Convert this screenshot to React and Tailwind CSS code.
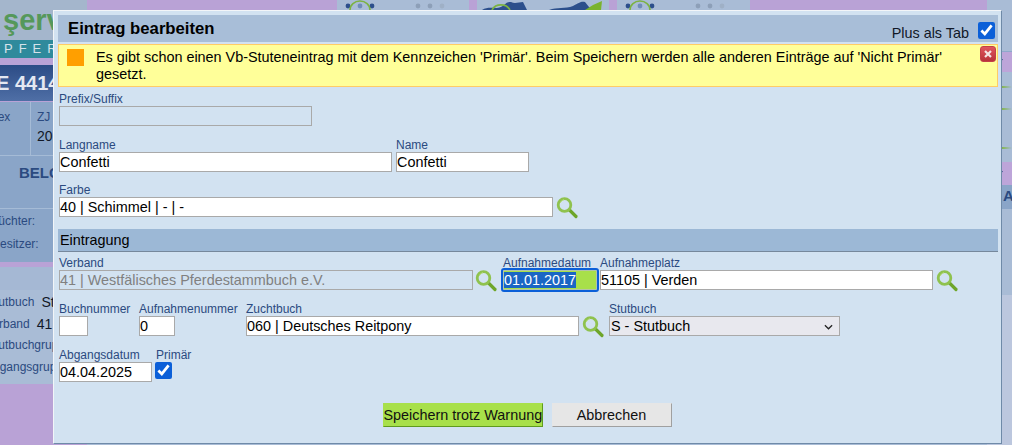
const FONT = "font-['Liberation_Sans',Arial,sans-serif]";

function Magnifier() {
  return (
    <svg viewBox="0 0 24 24" className="w-[24px] h-[24px] -my-[2px] shrink-0">
      <path d="M13.5 15 L20 21.5" stroke="#6ea52a" strokeWidth="3.2" strokeLinecap="round" />
      <circle cx="8.5" cy="10" r="6.3" fill="none" stroke="#8fc24e" strokeWidth="2.8" />
      <path d="M4.2 8 A5.5 5.5 0 0 1 8 4.6" fill="none" stroke="#b6dc80" strokeWidth="1" />
    </svg>
  );
}

function Label({ children }) {
  return <label className="block h-[14px] text-[12px] leading-[14px] text-[#2b4a80] whitespace-nowrap">{children}</label>;
}

function TextInput({ value, className = "", disabled = false }) {
  return (
    <input
      readOnly
      disabled={disabled}
      defaultValue={value}
      className={
        "block h-[20px] border border-[#a9a9a9] px-0 text-[14.4px] leading-[18px] outline-none " +
        (disabled ? "bg-[#d2e2f1] text-[#808080] " : "bg-white text-black ") +
        className
      }
    />
  );
}

function Check() {
  return <input type="checkbox" readOnly defaultChecked className="block m-0 w-[17px] h-[17px] accent-[#0b5fd8]" />;
}

function StripDots() {
  return (
    <svg viewBox="0 0 130 10" className="w-[130px] h-[10px]">
      <circle cx="11" cy="6" r="2.4" fill="#2c4f8c" />
      <circle cx="35" cy="6" r="2.4" fill="#2c4f8c" />
      <circle cx="23" cy="6" r="2.4" fill="#6f8cb8" />
      <path d="M13 10 A10 9 0 0 1 33 10" fill="none" stroke="#7cb342" strokeWidth="1.6" />
      <circle cx="81" cy="6" r="2.4" fill="#8d9fb8" />
      <circle cx="93" cy="6" r="2.4" fill="#8d9fb8" />
      <circle cx="105" cy="6" r="2.4" fill="#9fb0c6" />
    </svg>
  );
}

function StripWave() {
  return (
    <svg viewBox="0 0 133 10" className="w-[133px] h-[10px]">
      <path d="M5 10 C10 7 14 8 20 8 C28 7 28 1 34 2 C38 4 42 2 46 2 L50 10 Z" fill="#2c4f8c" />
      <path d="M15 10 A10 9 0 0 1 33 10" fill="none" stroke="#7cb342" strokeWidth="1.6" />
      <path d="M72 10 C80 7 88 9 96 6 C102 3 104 1 108 2 L112 7 L116 10 Z" fill="#2c4f8c" />
      <path d="M108 10 L116 5 L125 1 L124 10 Z" fill="#7ab32e" />
    </svg>
  );
}

function LeftColumn() {
  return (
    <div className="w-[87px] shrink-0 flex flex-col overflow-hidden">
      <div className="h-[40px] bg-[#a4b6cc] overflow-hidden pl-[3px] pt-[3px]">
        <span className="text-[29px] leading-[34px] font-bold text-[#55985a] whitespace-nowrap">şerv</span>
      </div>
      <div className="h-[18px] bg-[#2f8a9c] pl-[4px] text-[13px] leading-[18px] tracking-[6px] text-[#d5e2ea] whitespace-nowrap">PFER</div>
      <div className="h-[7px] bg-[#b9a2d6]" />
      <div className="h-[36px] bg-gradient-to-b from-[#2c4c86] to-[#4f6fa6] text-[20px] leading-[36px] font-bold text-[#e4e8f2] whitespace-nowrap">
        <div className="-ml-[4px]">E 4414</div>
      </div>
      <div className="h-[1px] bg-[#b9a2d6]" />
      <div className="h-[54px] flex bg-[#8aa5c8] border-b border-[#a5bbd6]">
        <div className="w-[31px] border-r border-[#a5bbd6] text-[12px] leading-[14px] text-[#2b4a80] pt-[8px] whitespace-nowrap">
          <div className="-ml-[19px]">Index</div>
        </div>
        <div className="pl-[6px] pt-[8px] text-[12px] leading-[14px] text-[#2b4a80] whitespace-nowrap">
          ZJ
          <div className="text-[14px] leading-[16px] mt-[4px] text-[#111827]">2017</div>
        </div>
      </div>
      <div className="h-[53px] bg-[#8aa5c8] border-b border-[#a5bbd6] pl-[19px] pt-[8px] text-[15px] leading-[18px] font-bold text-[#2b4a80] whitespace-nowrap">BELGIEN</div>
      <div className="h-[53px] bg-[#8aa5c8] pt-[5px] text-[12px] text-[#2b4a80] whitespace-nowrap">
        <div className="h-[23px] leading-[14px] -ml-[9px]">Züchter:</div>
        <div className="h-[16px] leading-[14px] -ml-[8px]">Besitzer:</div>
      </div>
      <div className="h-[5px] bg-[#b9a2d6]" />
      <div className="h-[23px] bg-[#a5b8d4]" />
      <div className="h-[94px] bg-[#a9bcd6] text-[12px] text-[#2b4a80] whitespace-nowrap pt-[1px]">
        <div className="h-[22px] leading-[20px] flex items-center gap-[7px] -ml-[13px]">Stutbuch <span className="text-[14px] text-[#111827]">Stutbuch</span></div>
        <div className="h-[22px] leading-[20px] flex items-center gap-[7px] -ml-[15px]">Verband <span className="text-[14px] text-[#111827]">41</span></div>
        <div className="h-[22px] leading-[20px] -ml-[13px]">Stutbuchgruppe</div>
        <div className="h-[22px] leading-[20px] -ml-[15px]">Abgangsgruppe</div>
      </div>
      <div className="flex-1 bg-[#b9a2d6]" />
    </div>
  );
}

function CenterColumn() {
  return (
    <div className="flex-1 flex flex-col">
      <div className="h-[10px] flex">
        <div className="w-[250px] bg-[#b9a2d6]" />
        <div className="w-[132px] bg-[#a9bcd6]"><StripDots /></div>
        <div className="w-[8px] bg-[#b9a2d6]" />
        <div className="w-[132px] bg-[#a9bcd6]"><StripWave /></div>
        <div className="w-[8px] bg-[#b9a2d6]" />
        <div className="w-[133px] bg-[#a9bcd6]"><StripDots /></div>
        <div className="flex-1 bg-[#b9a2d6]" />
      </div>
      <div className="flex-1 bg-[#a9bcd6]" />
    </div>
  );
}

function RightColumn() {
  return (
    <div className="w-[25px] shrink-0 flex flex-col overflow-hidden bg-[#a9bcd6]">
      <div className="h-[52px] border-b border-[#8fa8cc]" />
      <div className="h-[20px] bg-[#bda5d9] flex items-center justify-end pr-[9px]">
        <span className="w-0 h-0 border-l-[4px] border-r-[4px] border-t-[6px] border-l-transparent border-r-transparent border-t-[#2b4a80]" />
      </div>
      <div className="h-[14px]" />
      <div className="h-[2px] w-full bg-gradient-to-r from-[#fff0] via-[#7ab32e] to-[#fff0]" />
      <div className="h-[20px]" />
      <div className="h-[2px] w-full bg-gradient-to-r from-[#fff0] via-[#7ab32e] to-[#fff0]" />
      <div className="h-[37px]" />
      <div className="h-[2px] w-full bg-gradient-to-r from-[#fff0] via-[#7ab32e] to-[#fff0]" />
      <div className="h-[13px]" />
      <div className="h-[23px] bg-[#bda5d9] flex items-center justify-end pr-[9px]">
        <span className="w-0 h-0 border-l-[4px] border-r-[4px] border-t-[6px] border-l-transparent border-r-transparent border-t-[#2b4a80]" />
      </div>
      <div className="h-[24px] bg-[#8aa5c8] pl-[16px] text-[15px] leading-[22px] font-bold text-[#2b4a80] whitespace-nowrap">AR</div>
      <div className="h-[86px] flex-none" />
      <div className="flex-1 bg-[#bcc7de]" />
    </div>
  );
}

export default function App() {
  return (
    <div className={"relative flex w-[1012px] h-[445px] overflow-hidden " + FONT}>
      <LeftColumn />
      <CenterColumn />
      <RightColumn />

      <div className="absolute left-[53px] top-[10px] w-[949px] h-[434px] bg-[#d2e2f1] border border-[#6f8aa8] border-t-[#f2f5f8] border-l-[#f2f5f8] px-[4px] pt-[4px] pr-[3px]">
        <div className="h-[27px] bg-[#a8bed8] flex items-center justify-between pl-[10px] pr-[3px]">
          <span className="text-[16.7px] font-bold text-black">Eintrag bearbeiten</span>
          <div className="flex items-center gap-[9px] pt-[3px]">
            <span className="mt-[6px] text-[14.4px] leading-[17px] text-[#111827]">Plus als Tab</span>
            <Check />
          </div>
        </div>

        <div className="relative mt-[2px] h-[43px] bg-[#ffff99] border border-[#ffcc66] flex pl-[8px] pr-[40px]">
          <div className="w-[17px] h-[17px] bg-[#ff9f00] mt-[4px] shrink-0" />
          <p className="ml-[12px] mt-[4px] text-[14.4px] leading-[17px] text-black">
            Es gibt schon einen Vb-Stuteneintrag mit dem Kennzeichen 'Primär'. Beim Speichern werden alle anderen Einträge auf 'Nicht Primär' gesetzt.
          </p>
          <div className="absolute right-[1px] top-[1px] w-[16px] h-[16px] rounded-[3px] bg-gradient-to-b from-[#e0555e] to-[#b8323a] border border-[#c24048] flex items-center justify-center">
            <svg viewBox="0 0 10 10" className="w-[10px] h-[10px]">
              <path d="M2 2 L8 8 M8 2 L2 8" stroke="#f4e4e4" strokeWidth="2.2" />
            </svg>
          </div>
        </div>

        <div className="pl-[1px]">
          <div className="mt-[5px]">
            <Label>Prefix/Suffix</Label>
            <TextInput disabled value="" className="w-[253px]" />
          </div>

          <div className="mt-[12px] flex gap-[4px]">
            <div>
              <Label>Langname</Label>
              <TextInput value="Confetti" className="w-[333px]" />
            </div>
            <div>
              <Label>Name</Label>
              <TextInput value="Confetti" className="w-[133px]" />
            </div>
          </div>

          <div className="mt-[11px]">
            <Label>Farbe</Label>
            <div className="flex items-center gap-[3px]">
              <TextInput value="40 | Schimmel | - | -" className="w-[494px]" />
              <Magnifier />
            </div>
          </div>
        </div>

        <div className="mt-[12px] h-[23px] bg-[#9cb8d6] border-b border-[#76889c] pl-[2px] text-[14.4px] leading-[22px] text-black">Eintragung</div>

        <div className="pl-[1px]">
          <div className="mt-[4px] flex">
            <div>
              <Label>Verband</Label>
              <div className="flex items-center gap-[2px]">
                <TextInput disabled value="41 | Westfälisches Pferdestammbuch e.V." className="w-[414px]" />
                <Magnifier />
              </div>
            </div>
            <div className="ml-[4px] w-[97px]">
              <Label>Aufnahmedatum</Label>
              <div className="h-[20px] w-[94px] bg-[#a8e04a] border border-[#b3c4a8] outline-2 outline-[#0b5fd8] rounded-[1px] text-[14.4px] text-white whitespace-nowrap">
                <span className="inline-block align-top mt-[1px] h-[16px] leading-[16px] bg-[#1a66c4]">01.01.2017</span>
              </div>
            </div>
            <div>
              <Label>Aufnahmeplatz</Label>
              <div className="flex items-center gap-[3px]">
                <TextInput value="51105 | Verden" className="w-[333px]" />
                <Magnifier />
              </div>
            </div>
          </div>

          <div className="mt-[12px] flex">
            <div className="w-[80px]">
              <Label>Buchnummer</Label>
              <TextInput value="" className="w-[29px]" />
            </div>
            <div className="w-[107px]">
              <Label>Aufnahmenummer</Label>
              <TextInput value="0" className="w-[36px]" />
            </div>
            <div>
              <Label>Zuchtbuch</Label>
              <div className="flex items-center gap-[3px]">
                <TextInput value="060 | Deutsches Reitpony" className="w-[333px]" />
                <Magnifier />
              </div>
            </div>
            <div className="ml-[3px]">
              <Label>Stutbuch</Label>
              <div className="relative w-[231px]">
                <select className="block h-[20px] w-full appearance-none border border-[#a9a9a9] bg-[#e8e8ee] pl-[1px] text-[14.4px] leading-[18px] text-black outline-none">
                  <option>S - Stutbuch</option>
                </select>
                <svg viewBox="0 0 10 6" className="absolute right-[7px] top-[8px] w-[9px] h-[6px]">
                  <path d="M1 1 L5 5 L9 1" fill="none" stroke="#222" strokeWidth="1.4" />
                </svg>
              </div>
            </div>
          </div>

          <div className="mt-[12px] flex gap-[3px]">
            <div>
              <Label>Abgangsdatum</Label>
              <TextInput value="04.04.2025" className="w-[93px]" />
            </div>
            <div>
              <div className="pl-[1px]"><Label>Primär</Label></div>
              <Check />
            </div>
          </div>
        </div>

        <div className="mt-[21px] flex justify-center gap-[9px] pr-[2px]">
          <button className="h-[24px] w-[160px] bg-[#a8e04a] border border-[#a8e04a] border-r-[#5f9a1e] border-b-[#5f9a1e] text-[14.4px] leading-[20px] text-[#111] whitespace-nowrap p-0">Speichern trotz Warnung</button>
          <button className="h-[24px] w-[120px] bg-[#e6e6e6] border border-[#e6e6e6] border-r-[#a0a0a0] border-b-[#a0a0a0] text-[14.4px] leading-[20px] text-[#111] p-0">Abbrechen</button>
        </div>
      </div>
    </div>
  );
}
